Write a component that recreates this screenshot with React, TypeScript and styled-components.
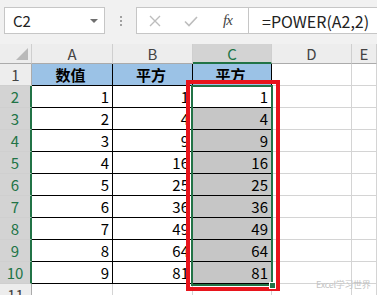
import { Fragment } from "react";
import styled, { createGlobalStyle } from "styled-components";

const GlobalStyle = createGlobalStyle`
  html, body {
    margin: 0;
    padding: 0;
    background: #fff;
  }
  body {
    font-family: "Noto Sans CJK SC", "Noto Sans", sans-serif;
  }
`;

const Window = styled.div`
  width: 377px;
  height: 295px;
  overflow: hidden;
  display: flex;
  flex-direction: column;
  background: #fff;
`;

const FormulaBar = styled.div`
  flex: none;
  height: 44px;
  box-sizing: border-box;
  padding: 7px 0 0 4px;
  display: flex;
  align-items: flex-start;
  background: #f1f1f1;
`;

const NameBox = styled.div`
  width: 101px;
  height: 27px;
  box-sizing: border-box;
  border: 1px solid #c6c6c6;
  background: #fff;
  display: flex;
  align-items: center;
  justify-content: space-between;
  padding: 0 6px 0 8px;
  font-size: 15px;
  color: #222;
`;

const Caret = styled.span`
  width: 0;
  height: 0;
  border-left: 4px solid transparent;
  border-right: 4px solid transparent;
  border-top: 4px solid #6f6f6f;
`;

const Grip = styled.div`
  width: 31px;
  height: 27px;
  display: flex;
  flex-direction: column;
  align-items: center;
  justify-content: center;
  gap: 2px;

  span {
    width: 2px;
    height: 2px;
    background: #a0a0a0;
  }
`;

const Buttons = styled.div`
  width: 112px;
  height: 27px;
  box-sizing: border-box;
  border: 1px solid #c6c6c6;
  border-right: none;
  background: #fff;
  display: flex;
  align-items: center;
  padding-left: 11px;
  gap: 21px;
`;

const Fx = styled.span`
  font-family: "Liberation Serif", serif;
  font-style: italic;
  font-size: 15px;
  color: #444;
  margin-left: 3px;
  letter-spacing: -1px;
`;

const Input = styled.div`
  flex: 1;
  height: 27px;
  box-sizing: border-box;
  border: 1px solid #c6c6c6;
  border-right: none;
  background: #fff;
  display: flex;
  align-items: center;
  padding-left: 13px;
  font-size: 16px;
  color: #222;
`;

const Sheet = styled.div`
  position: relative;
  flex: 1;
  display: grid;
  grid-template-columns: 32px 81px 80px 79px 80px 1fr;
  grid-template-rows: 20px repeat(11, 22px);
  font-size: 15px;
`;

const Corner = styled.div`
  position: relative;
  background: #ededed;
  border-right: 1px solid #cfcfcf;
  border-bottom: 1px solid #ababab;

  &::after {
    content: "";
    position: absolute;
    right: 3px;
    bottom: 3px;
    width: 0;
    height: 0;
    border-left: 12px solid transparent;
    border-bottom: 12px solid #b9b9b9;
  }
`;

const ColHead = styled.div<{ $selected?: boolean }>`
  box-sizing: border-box;
  display: flex;
  align-items: center;
  justify-content: center;
  background: ${(p) => (p.$selected ? "#d3d3d3" : "#ededed")};
  color: ${(p) => (p.$selected ? "#217346" : "#444")};
  border-right: 1px solid #cfcfcf;
  border-bottom: ${(p) => (p.$selected ? "2px solid #217346" : "1px solid #ababab")};
`;

const RowHead = styled.div<{ $selected?: boolean }>`
  box-sizing: border-box;
  display: flex;
  align-items: center;
  justify-content: center;
  background: ${(p) => (p.$selected ? "#d3d3d3" : "#ededed")};
  color: ${(p) => (p.$selected ? "#217346" : "#444")};
  border-bottom: 1px solid #cfcfcf;
  border-right: ${(p) => (p.$selected ? "2px solid #217346" : "1px solid #ababab")};
`;

type Fill = "none" | "blue" | "selected";

const Cell = styled.div<{ $fill: Fill; $table: boolean; $title?: boolean }>`
  box-sizing: border-box;
  display: flex;
  align-items: center;
  justify-content: ${(p) => (p.$title ? "center" : "flex-end")};
  padding-right: 3px;
  color: #000;
  font-weight: ${(p) => (p.$title ? 700 : 400)};
  background: ${(p) =>
    p.$fill === "blue" ? "#9bc2e6" : p.$fill === "selected" ? "#c6c6c6" : "#fff"};
  border-right: 1px solid ${(p) => (p.$table ? "#000" : "#d4d4d4")};
  border-bottom: 1px solid ${(p) => (p.$table ? "#000" : "#d4d4d4")};
`;

const RedFrame = styled.div`
  position: absolute;
  left: 186px;
  top: 36px;
  width: 94px;
  height: 211px;
  box-sizing: border-box;
  border: 4px solid #e8141c;
  pointer-events: none;
`;

const Selection = styled.div`
  position: absolute;
  left: 191px;
  top: 41px;
  width: 82px;
  height: 201px;
  box-sizing: border-box;
  border: 2px solid #217346;
  pointer-events: none;
`;

const FillHandle = styled.div`
  position: absolute;
  left: 269px;
  top: 238px;
  width: 7px;
  height: 7px;
  box-sizing: border-box;
  background: #217346;
  border: 1px solid #fff;
`;

const Watermark = styled.div`
  position: absolute;
  left: 316px;
  top: 235px;
  font-size: 9px;
  line-height: 12px;
  letter-spacing: -0.3px;
  color: #c4c4c4;
  white-space: nowrap;
`;

const cols = ["A", "B", "C", "D", "E"];

const rows: string[][] = [
  ["数值", "平方", "平方"],
  ...Array.from({ length: 9 }, (_, i) => {
    const n = i + 1;
    return [String(n), String(n * n), String(n * n)];
  }),
  [],
];

function cellFill(r: number, c: number): Fill {
  if (r === 0 && c < 3) return "blue";
  if (c === 2 && r >= 2 && r <= 9) return "selected";
  return "none";
}

export default function App() {
  return (
    <Window>
      <GlobalStyle />
      <FormulaBar>
        <NameBox>
          C2
          <Caret />
        </NameBox>
        <Grip>
          <span />
          <span />
          <span />
        </Grip>
        <Buttons>
          <svg width="14" height="14" viewBox="0 0 14 14">
            <path d="M2 2 L12 12 M12 2 L2 12" stroke="#bdbdbd" strokeWidth="1.4" fill="none" />
          </svg>
          <svg width="16" height="14" viewBox="0 0 16 14">
            <path d="M2 7.5 L6 11.5 L14 3" stroke="#bdbdbd" strokeWidth="1.6" fill="none" />
          </svg>
          <Fx>fx</Fx>
        </Buttons>
        <Input>=POWER(A2,2)</Input>
      </FormulaBar>

      <Sheet>
        <Corner />
        {cols.map((c) => (
          <ColHead key={c} $selected={c === "C"}>
            {c}
          </ColHead>
        ))}
        {rows.map((row, r) => (
          <Fragment key={r}>
            <RowHead $selected={r >= 1 && r <= 9}>{r + 1}</RowHead>
            {cols.map((_, c) => (
              <Cell
                key={c}
                $fill={cellFill(r, c)}
                $table={r <= 9 && c < 3}
                $title={r === 0}
              >
                {row[c] ?? ""}
              </Cell>
            ))}
          </Fragment>
        ))}
        <Watermark>Excel学习世界</Watermark>
        <RedFrame />
        <Selection />
        <FillHandle />
      </Sheet>
    </Window>
  );
}
